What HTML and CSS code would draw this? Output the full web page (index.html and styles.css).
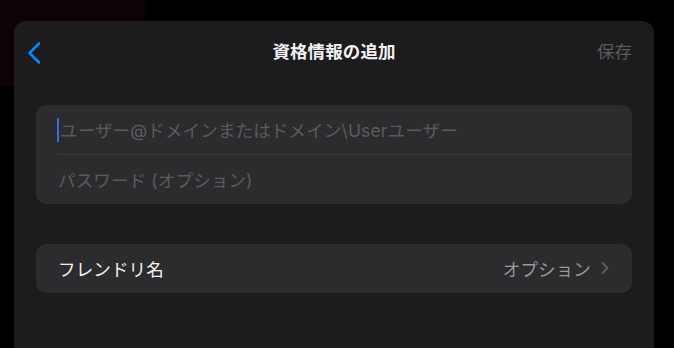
FILE: index.html
```html
<!DOCTYPE html>
<html lang="ja">
<head>
<meta charset="utf-8">
<link rel="stylesheet" href="styles.css">
</head>
<body>
<div class="backdrop"></div>
<div class="sheet">
  <div class="header">
    <div class="back">
      <svg width="14" height="24" viewBox="0 0 14 24"><path d="M12 2.5 L2.5 12 L12 21.5" fill="none" stroke="#0a84ff" stroke-width="2.6" stroke-linecap="round" stroke-linejoin="round"/></svg>
    </div>
    <div class="title">資格情報の追加</div>
    <div class="save">保存</div>
  </div>
  <div class="group">
    <div class="row"><span class="cursor"></span><span class="placeholder">ユーザー@ドメインまたはドメイン\Userユーザー</span></div>
    <div class="sep"></div>
    <div class="row"><span class="placeholder">パスワード (オプション)</span></div>
  </div>
  <div class="group group2">
    <div class="row between">
      <span class="label">フレンドリ名</span>
      <span class="value">オプション
        <svg width="10" height="14" viewBox="0 0 10 14"><path d="M2.5 1.8 L7.5 7 L2.5 12.2" fill="none" stroke="#5c5c60" stroke-width="1.9" stroke-linecap="round" stroke-linejoin="round"/></svg>
      </span>
    </div>
  </div>
</div>
</body>
</html>
```

FILE: styles.css
```css
html, body {
  margin: 0;
  padding: 0;
  background: #000;
  height: 100%;
  overflow: hidden;
  font-family: "Inter", "Noto Sans CJK JP", sans-serif;
}
.backdrop {
  position: absolute;
  left: 0;
  top: 0;
  width: 145px;
  height: 86px;
  background: #0b0305;
}
.sheet {
  position: relative;
  margin: 21px 0 0 14px;
  width: 640px;
  height: 340px;
  background: #1c1c1e;
  border-radius: 12px 12px 0 0;
  box-sizing: border-box;
  padding: 0 22px;
}
.header {
  height: 62px;
  display: flex;
  align-items: center;
  justify-content: space-between;
  margin: 0 -22px;
  padding: 0 22px 0 13px;
  position: relative;
}
.back {
  display: flex;
  align-items: center;
  padding-top: 1px;
}
.title {
  position: absolute;
  left: 0;
  right: 0;
  text-align: center;
  color: #f2f2f2;
  font-size: 17.5px;
  font-weight: 600;
  letter-spacing: 0.1px;
  line-height: 1;
  pointer-events: none;
}
.save {
  color: #5a5a5c;
  font-size: 17.5px;
  line-height: 1;
}
.group {
  margin-top: 22px;
  background: #2c2c2e;
  border-radius: 10px;
  overflow: hidden;
}
.group2 {
  margin-top: 40px;
}
.row {
  height: 49px;
  display: flex;
  align-items: center;
  padding: 0 22px;
  font-size: 17.5px;
  letter-spacing: 0.15px;
}
.group .row:last-child {
  padding-bottom: 1px;
  box-sizing: border-box;
}
.between {
  justify-content: space-between;
}
.sep {
  height: 1px;
  background: #3a3a3c;
  margin-left: 22px;
}
.cursor {
  width: 2px;
  height: 24px;
  background: #3d68e0;
  margin-right: 1px;
  margin-left: -1px;
}
.placeholder {
  color: #5b5b5e;
}
.label {
  color: #f2f2f2;
}
.value {
  color: #98989d;
  display: flex;
  align-items: center;
  gap: 9px;
}
```
